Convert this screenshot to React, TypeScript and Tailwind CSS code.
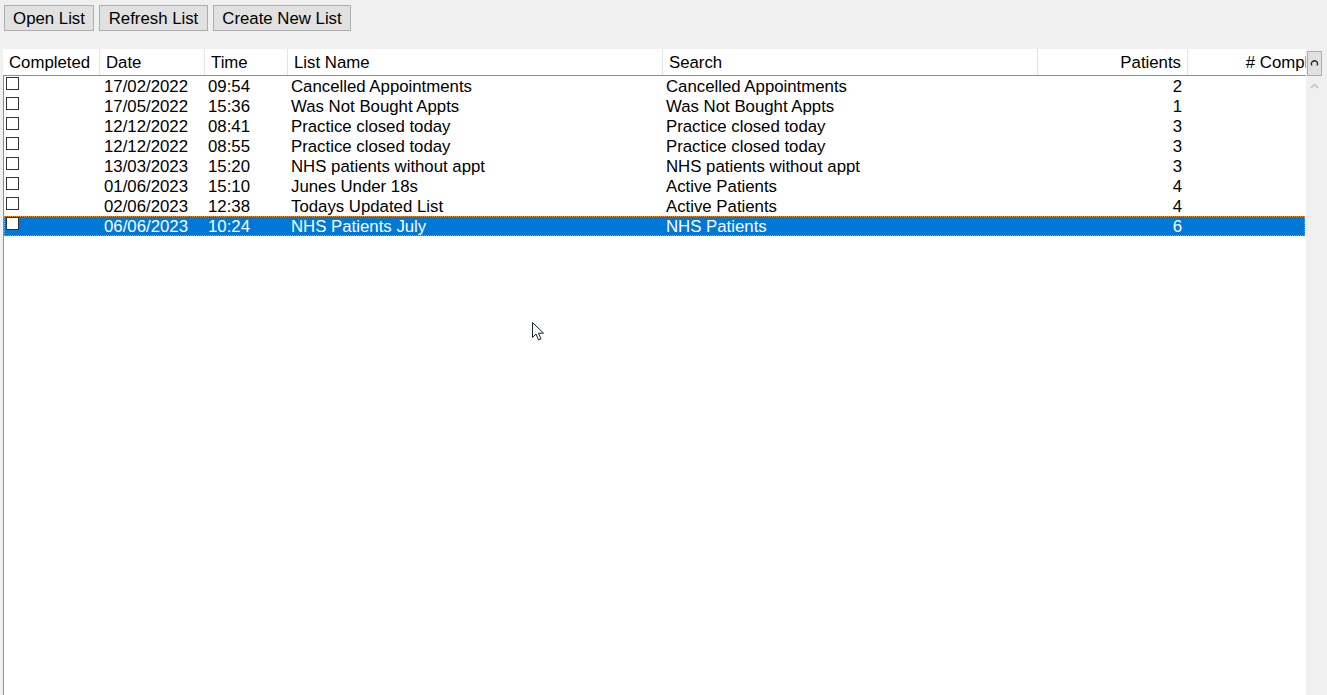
import React from "react";

type Row = { date: string; time: string; name: string; search: string; patients: string; selected?: boolean };

const rows: Row[] = [
  { date: "17/02/2022", time: "09:54", name: "Cancelled Appointments", search: "Cancelled Appointments", patients: "2" },
  { date: "17/05/2022", time: "15:36", name: "Was Not Bought Appts", search: "Was Not Bought Appts", patients: "1" },
  { date: "12/12/2022", time: "08:41", name: "Practice closed today", search: "Practice closed today", patients: "3" },
  { date: "12/12/2022", time: "08:55", name: "Practice closed today", search: "Practice closed today", patients: "3" },
  { date: "13/03/2023", time: "15:20", name: "NHS patients without appt", search: "NHS patients without appt", patients: "3" },
  { date: "01/06/2023", time: "15:10", name: "Junes Under 18s", search: "Active Patients", patients: "4" },
  { date: "02/06/2023", time: "12:38", name: "Todays Updated List", search: "Active Patients", patients: "4" },
  { date: "06/06/2023", time: "10:24", name: "NHS Patients July", search: "NHS Patients", patients: "6", selected: true },
];

function Btn({ label, w }: { label: string; w: string }) {
  return (
    <button className={`h-[26px] ${w} border border-[#adadad] bg-[#e1e1e1] text-[16.8px] leading-[24px] pt-[2px] text-black flex items-center justify-center`}>
      {label}
    </button>
  );
}

export default function App() {
  return (
    <div
      className="relative w-[1327px] h-[695px] overflow-hidden bg-[#f0f0f0] text-black"
      style={{ fontFamily: '"Liberation Sans", Arial, sans-serif' }}
    >
      <div className="flex gap-[5px] pl-[4px] pt-[5px]">
        <Btn label="Open List" w="w-[90px]" />
        <Btn label="Refresh List" w="w-[109px]" />
        <Btn label="Create New List" w="w-[138px]" />
      </div>

      <div className="flex mt-[18px] ml-[3px] h-[646px]">
        <div className="w-[1303px] flex flex-col">
          {/* header */}
          <div className="h-[27px] bg-white border-b border-[#8e8f8f] flex text-[16.8px] leading-[26px] overflow-hidden shrink-0">
            <div className="w-[97px] shrink-0 border-r border-[#e5e5e5] pl-[6px] pt-[1px]">Completed</div>
            <div className="w-[105px] shrink-0 border-r border-[#e5e5e5] pl-[6px] pt-[1px]">Date</div>
            <div className="w-[83px] shrink-0 border-r border-[#e5e5e5] pl-[6px] pt-[1px]">Time</div>
            <div className="w-[375px] shrink-0 border-r border-[#e5e5e5] pl-[6px] pt-[1px]">List Name</div>
            <div className="w-[375px] shrink-0 border-r border-[#e5e5e5] pl-[6px] pt-[1px]">Search</div>
            <div className="w-[150px] shrink-0 border-r border-[#e5e5e5] pr-[6px] pt-[1px] text-right">Patients</div>
            <div className="w-[159px] shrink-0 pr-[6px] pt-[1px] text-right whitespace-nowrap">
              # Completed
            </div>
          </div>
          {/* body */}
          <div className="flex-1 bg-white border-l border-[#8e8f8f] text-[16.8px] leading-[20px]">
            {rows.map((r, i) => (
              <div
                key={i}
                className={`h-[20px] w-[1301px] flex whitespace-nowrap ${
                  r.selected
                    ? "bg-[#0078d7] text-white outline-1 outline-dotted outline-[#f28a1c] -outline-offset-1"
                    : ""
                }`}
              >
                <div className="w-[96px] shrink-0 pl-[2px] pt-[1px]">
                  <div className="w-[13px] h-[13px] border border-[#333333] bg-white" />
                </div>
                <div className="w-[105px] shrink-0 pl-[4px] pt-[1px]">{r.date}</div>
                <div className="w-[83px] shrink-0 pl-[3px] pt-[1px]">{r.time}</div>
                <div className="w-[375px] shrink-0 pl-[3px] pt-[1px]">{r.name}</div>
                <div className="w-[375px] shrink-0 pl-[3px] pt-[1px]">{r.search}</div>
                <div className="w-[150px] shrink-0 pr-[6px] pt-[1px] text-right">{r.patients}</div>
                <div className="flex-1" />
              </div>
            ))}
          </div>
        </div>
        {/* scrollbar */}
        <div className="w-[21px] bg-[#f0f0f0] flex flex-col items-start pl-[1px] pt-[2px]">
          <div className="w-[15px] h-[25px] border border-[#adadad] bg-[#e1e1e1] flex items-center justify-center">
            <svg width="9" height="9" viewBox="0 0 9 9">
              <path d="M2 6.5 A3 3 0 1 1 7 6.5" fill="none" stroke="#222" strokeWidth="1.3" />
            </svg>
          </div>
          <div className="w-[15px] flex justify-center mt-[7px]">
            <svg width="9" height="6" viewBox="0 0 9 6">
              <path d="M1 5 L4.5 1.5 L8 5" fill="none" stroke="#c3c3c3" strokeWidth="1.6" />
            </svg>
          </div>
        </div>
      </div>

      {/* mouse cursor */}
      <svg className="absolute left-[532px] top-[322px]" width="13" height="20" viewBox="0 0 13 20">
        <path
          d="M0.5 0.5 L0.5 15.5 L4 12 L6.5 18 L9 17 L6.5 11.2 L11.5 11.2 Z"
          fill="#ffffff"
          stroke="#1a2233"
          strokeWidth="1"
          strokeLinejoin="miter"
        />
      </svg>
    </div>
  );
}
